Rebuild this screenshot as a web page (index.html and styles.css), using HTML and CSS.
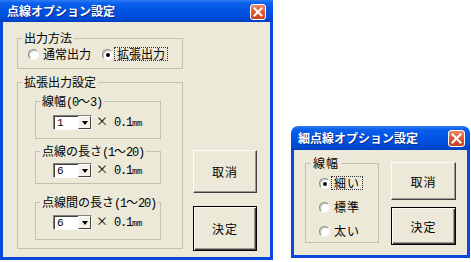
FILE: index.html
```
<!DOCTYPE html>
<html lang="ja">
<head>
<meta charset="utf-8">
<link rel="stylesheet" href="styles.css">
</head>
<body>
<div class="stage">
  <div class="window main">
    <div class="titlebar">
      <span class="title">点線オプション設定</span>
      <span class="close close-main"><svg viewBox="0 0 16 16" width="16" height="16"><defs><linearGradient id="cg1" x1="0" y1="0" x2="0" y2="1"><stop offset="0" stop-color="#f08d6c"/><stop offset="0.5" stop-color="#dc5a34"/><stop offset="1" stop-color="#c2401c"/></linearGradient></defs><rect x="0.5" y="0.5" width="15" height="15" rx="2.5" fill="url(#cg1)" stroke="#fff"/><path d="M4.5 4.5 L11.5 11.5 M11.5 4.5 L4.5 11.5" stroke="#fff" stroke-width="2" stroke-linecap="square"/></svg></span>
    </div>
    <div class="client main-client">
      <div class="col-left">
        <fieldset class="grp grp-out">
          <legend>出力方法</legend>
          <div class="out-body">
            <span class="opt"><span class="radio"></span><span class="opt-text">通常出力</span></span>
            <span class="opt opt2"><span class="radio on"></span><span class="opt-text focus">拡張出力</span></span>
          </div>
        </fieldset>
        <fieldset class="grp grp-ext">
          <legend>拡張出力設定</legend>
          <div class="ext-body">
            <fieldset class="grp grp-in in1">
              <legend>線幅<span class="hw">(0</span>～<span class="hw">3)</span></legend>
              <div class="combo-row">
                <div class="combo"><span class="combo-val">1</span><span class="combo-btn"></span></div>
                <span class="unit"><span class="times">×</span><span class="hw"> 0.1</span><span class="mm">mm</span></span>
              </div>
            </fieldset>
            <fieldset class="grp grp-in in2">
              <legend>点線の長さ<span class="hw">(1</span>～<span class="hw">20)</span></legend>
              <div class="combo-row">
                <div class="combo"><span class="combo-val">6</span><span class="combo-btn"></span></div>
                <span class="unit"><span class="times">×</span><span class="hw"> 0.1</span><span class="mm">mm</span></span>
              </div>
            </fieldset>
            <fieldset class="grp grp-in in3">
              <legend>点線間の長さ<span class="hw">(1</span>～<span class="hw">20)</span></legend>
              <div class="combo-row">
                <div class="combo"><span class="combo-val">6</span><span class="combo-btn"></span></div>
                <span class="unit"><span class="times">×</span><span class="hw"> 0.1</span><span class="mm">mm</span></span>
              </div>
            </fieldset>
          </div>
        </fieldset>
      </div>
      <div class="col-right main-buttons">
        <div class="btn btn-main">取消</div>
        <div class="btn btn-main btn-main2 default">決定</div>
      </div>
    </div>
  </div>

  <div class="window sub">
    <div class="titlebar sub-title">
      <span class="title">細点線オプション設定</span>
      <span class="close close-sub"><svg viewBox="0 0 17 17" width="17" height="17"><defs><linearGradient id="cg2" x1="0" y1="0" x2="0" y2="1"><stop offset="0" stop-color="#f08d6c"/><stop offset="0.5" stop-color="#dc5a34"/><stop offset="1" stop-color="#c2401c"/></linearGradient></defs><rect x="0.5" y="0.5" width="16" height="16" rx="2.5" fill="url(#cg2)" stroke="#fff"/><path d="M4.5 4.5 L12.5 12.5 M12.5 4.5 L4.5 12.5" stroke="#fff" stroke-width="2" stroke-linecap="square"/></svg></span>
    </div>
    <div class="client sub-client">
      <fieldset class="grp grp-sub">
        <legend>線幅</legend>
        <div class="sub-body">
          <span class="opt"><span class="radio on"></span><span class="opt-text focus">細い</span></span>
          <span class="opt"><span class="radio"></span><span class="opt-text">標準</span></span>
          <span class="opt"><span class="radio"></span><span class="opt-text">太い</span></span>
        </div>
      </fieldset>
      <div class="col-right sub-buttons">
        <div class="btn btn-sub">取消</div>
        <div class="btn btn-sub default">決定</div>
      </div>
    </div>
  </div>
</div>
</body>
</html>
```
FILE: styles.css
```
* { box-sizing: border-box; }
html, body {
  margin: 0;
  padding: 0;
}
body {
  width: 471px;
  height: 262px;
  overflow: hidden;
  background: #fff;
  font-family: "Noto Sans CJK JP", sans-serif;
  font-size: 12px;
  color: #000;
}
.stage {
  display: flex;
  align-items: flex-start;
}
.window {
  display: flex;
  flex-direction: column;
}
.main {
  width: 273px;
  height: 260px;
}
.sub {
  width: 179px;
  height: 132px;
  margin-left: 18px;
  margin-top: 126px;
}
.titlebar {
  height: 22px;
  flex: none;
  display: flex;
  align-items: center;
  justify-content: space-between;
  padding: 0 7px 0 7px;
  background: linear-gradient(to bottom, #2f7cf5 0%, #0a5fec 15%, #0054e3 50%, #004bd8 80%, #0040c0 100%);
}
.sub-title {
  height: 24px;
  padding: 0 5px 0 7px;
  border-radius: 7px 7px 0 0;
}
.title {
  color: #fff;
  font-weight: bold;
  font-size: 12px;
  line-height: 14px;
  text-shadow: 1px 1px 0 #0c2a8a;
  white-space: nowrap;
}
.close {
  display: flex;
}
.close-main {
  margin-top: 1px;
}
.client {
  flex: 1;
  display: flex;
  align-items: flex-start;
  background: #ece9d8;
  border: 3px solid #0848dc;
  border-top: 0;
}
.grp {
  margin: 0;
  padding: 0;
  min-width: 0;
  border: 1px solid #c4c1b0;
}
.grp legend {
  margin-left: 4px;
  padding: 0 2px;
  line-height: 14px;
  height: 14px;
  white-space: nowrap;
}
.hw {
  font-family: "Liberation Mono", monospace;
  letter-spacing: -1.2px;
  white-space: pre;
}
.col-left {
  margin-left: 14px;
  width: 166px;
}
.grp-out {
  margin-top: 9px;
  width: 166px;
}
.out-body {
  display: flex;
  align-items: center;
  height: 12px;
  padding-left: 10px;
  margin-top: 3px;
  margin-bottom: 8px;
}
.opt {
  display: flex;
  align-items: center;
  white-space: nowrap;
}
.opt-text {
  margin-left: 1px;
  line-height: 12px;
  padding: 0 2px;
  border: 1px solid transparent;
}
.opt-text.focus {
  border: 1px dotted #333;
}
.opt2 {
  margin-left: 8px;
}
.radio {
  width: 11px;
  height: 11px;
  flex: none;
  border-radius: 50%;
  background: #fff;
  border: 1px solid;
  border-color: #8a8a86 #f4f4f0 #f4f4f0 #8a8a86;
  box-shadow: inset 1px 1px 0 #c4c4bc;
  position: relative;
}
.radio.on::after {
  content: "";
  position: absolute;
  left: 3px;
  top: 3px;
  width: 4px;
  height: 4px;
  border-radius: 50%;
  background: #000;
}
.grp-ext {
  margin-top: 6px;
  width: 166px;
}
.ext-body {
  padding: 5px 0 8px 17px;
}
.grp-in {
  width: 126px;
}
.in2 { margin-top: 5px; }
.in3 { margin-top: 11px; }
.combo-row {
  display: flex;
  align-items: center;
  height: 15px;
  padding-left: 17px;
}
.in1 .combo-row { margin-top: 7px; margin-bottom: 8px; }
.in2 .combo-row { margin-top: 5px; margin-bottom: 5px; }
.in3 .combo-row { margin-top: 6px; margin-bottom: 9px; }
.combo {
  display: flex;
  width: 39px;
  height: 15px;
  background: #fff;
  border: 1px solid;
  border-color: #808080 #f8f8f4 #f8f8f4 #808080;
  box-shadow: inset 1px 1px 0 #404040;
}
.combo-val {
  flex: 1;
  padding-left: 3px;
  padding-top: 1px;
  font-family: "Liberation Mono", monospace;
  font-size: 11px;
  line-height: 12px;
}
.combo-btn {
  width: 13px;
  height: 13px;
  display: flex;
  align-items: center;
  justify-content: center;
  background: #f2f1ea;
  border: 1px solid;
  border-color: #fff #404040 #404040 #fff;
}
.combo-btn::after {
  content: "";
  border-left: 3.5px solid transparent;
  border-right: 3.5px solid transparent;
  border-top: 4px solid #000;
}
.unit {
  display: flex;
  align-items: baseline;
  margin-left: 4px;
  line-height: 14px;
  white-space: nowrap;
}
.times {
  display: inline-block;
  width: 12px;
  text-align: center;
}
.mm {
  font-family: "Liberation Mono", monospace;
  font-size: 9px;
  letter-spacing: -0.4px;
}
.col-right {
  display: flex;
  flex-direction: column;
}
.main-buttons {
  margin-left: 10px;
  padding-top: 128px;
}
.btn {
  display: flex;
  align-items: center;
  justify-content: center;
  background: #ece9d8;
  border: 1px solid;
  border-color: #fbfbf8 #404040 #404040 #fbfbf8;
  box-shadow: inset -1px -1px 0 #9a9890;
  letter-spacing: 1px;
}
.btn.default {
  border: 1px solid #000;
  box-shadow: inset 1px 1px 0 #fbfbf8, inset -1px -1px 0 #404040, inset -2px -2px 0 #9a9890;
}
.btn-main {
  width: 64px;
  height: 43px;
}
.btn-main2 {
  margin-top: 13px;
  height: 45px;
}
.grp-sub {
  margin-left: 11px;
  margin-top: 6px;
  width: 74px;
}
.grp-sub legend {
  margin-left: 5px;
  letter-spacing: 1px;
}
.sub-body {
  display: flex;
  flex-direction: column;
  gap: 10px;
  padding: 6px 0 4px 13px;
}
.sub-body .opt {
  height: 14px;
}
.sub-body .opt-text {
  letter-spacing: 1px;
}
.sub-buttons {
  margin-left: 12px;
  padding-top: 12px;
}
.btn-sub {
  width: 65px;
  height: 38px;
}
.btn-sub + .btn-sub {
  margin-top: 7px;
}
```
